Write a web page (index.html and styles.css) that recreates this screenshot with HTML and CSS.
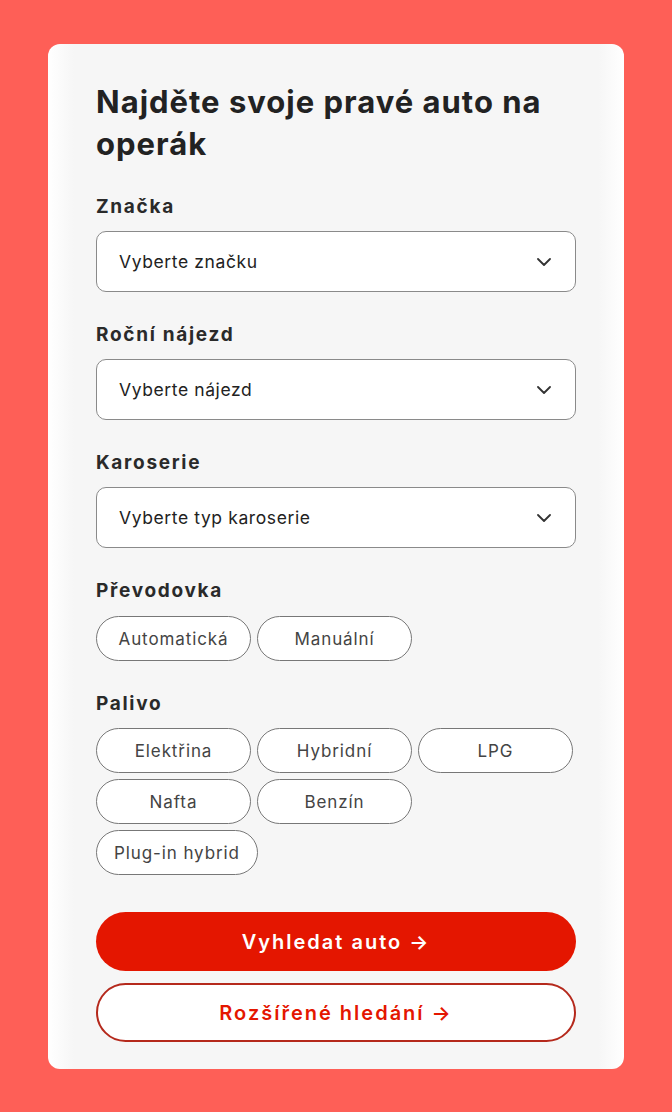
FILE: index.html
```html
<!DOCTYPE html>
<html lang="cs">

<head>
    <meta charset="utf-8">
    <title>Najděte svoje pravé auto</title>
    <link rel="stylesheet" href="styles.css">
</head>

<body>

    <div class="card">

        <h1>Najděte svoje pravé auto na operák</h1>

        <!-- Selecty -->
        <div class="field">
            <label class="label">Značka</label>
            <div class="select">
                <span>Vyberte značku</span>
                <svg class="chevron" width="14" height="8" viewBox="0 0 14 8"><path d="M1 1l6 6 6-6" /></svg>
            </div>
        </div>

        <div class="field">
            <label class="label">Roční nájezd</label>
            <div class="select">
                <span>Vyberte nájezd</span>
                <svg class="chevron" width="14" height="8" viewBox="0 0 14 8"><path d="M1 1l6 6 6-6" /></svg>
            </div>
        </div>

        <div class="field">
            <label class="label">Karoserie</label>
            <div class="select">
                <span>Vyberte typ karoserie</span>
                <svg class="chevron" width="14" height="8" viewBox="0 0 14 8"><path d="M1 1l6 6 6-6" /></svg>
            </div>
        </div>

        <!-- Chipy -->
        <div class="field">
            <label class="label label-chips">Převodovka</label>
            <div class="chips">
                <button class="chip">Automatická</button>
                <button class="chip">Manuální</button>
            </div>
        </div>

        <div class="field">
            <label class="label">Palivo</label>
            <div class="chips">
                <button class="chip">Elektřina</button>
                <button class="chip">Hybridní</button>
                <button class="chip">LPG</button>
                <button class="chip">Nafta</button>
                <button class="chip">Benzín</button>
                <button class="chip">Plug-in hybrid</button>
            </div>
        </div>

        <div class="actions">
            <button class="btn btn-primary">Vyhledat auto →</button>
            <button class="btn btn-outline">Rozšířené hledání →</button>
        </div>

    </div>

</body>

</html>
```

FILE: styles.css
```css
body {
    margin: 0;
    background-color: #fe5f57;
    font-family: Inter, "Liberation Sans", sans-serif;
    color: #222;
}

.card {
    width: 480px;
    margin: 44px 0 0 48px;
    padding: 37px 48px 27px;
    border-radius: 12px;
    background: linear-gradient(to right, #fff, #f6f6f6 26px, #f6f6f6 calc(100% - 26px), #fff);
}

h1 {
    margin: 0 0 30px;
    font-size: 31px;
    line-height: 42px;
    font-weight: 700;
    letter-spacing: 1px;
    color: #222;
}

.field {
    margin-bottom: 31px;
}

.label {
    display: block;
    margin-bottom: 12px;
    font-size: 19px;
    line-height: 24px;
    font-weight: 700;
    letter-spacing: 1.7px;
    color: #2a2a2a;
}

.label-chips {
    margin-bottom: 13px;
}

.select {
    display: flex;
    align-items: center;
    justify-content: space-between;
    height: 59px;
    padding: 0 24px 0 22px;
    background-color: #fff;
    border: 1px solid #8a8a8a;
    border-radius: 10px;
    font-size: 17.5px;
    letter-spacing: 0.6px;
    color: #222;
}

.chevron {
    fill: none;
    stroke: #333;
    stroke-width: 1.8;
    stroke-linecap: round;
    stroke-linejoin: round;
}

.chips {
    display: flex;
    flex-wrap: wrap;
    gap: 6px;
}

.chip {
    min-width: 155px;
    height: 45px;
    padding: 0 17px;
    background-color: #fff;
    border: 1px solid #777;
    border-radius: 23px;
    font-family: Inter, "Liberation Sans", sans-serif;
    font-size: 17px;
    letter-spacing: 0.9px;
    color: #444;
}

.actions {
    display: flex;
    flex-direction: column;
    gap: 12px;
    margin-top: 37px;
}

.btn {
    height: 59px;
    border-radius: 30px;
    font-family: Inter, "Liberation Sans", sans-serif;
    font-size: 20px;
    font-weight: 600;
    letter-spacing: 2px;
}

.btn-primary {
    background-color: #e41600;
    border: none;
    color: #fff;
}

.btn-outline {
    background-color: #fff;
    border: 2px solid #b5291c;
    color: #e41600;
}
```
